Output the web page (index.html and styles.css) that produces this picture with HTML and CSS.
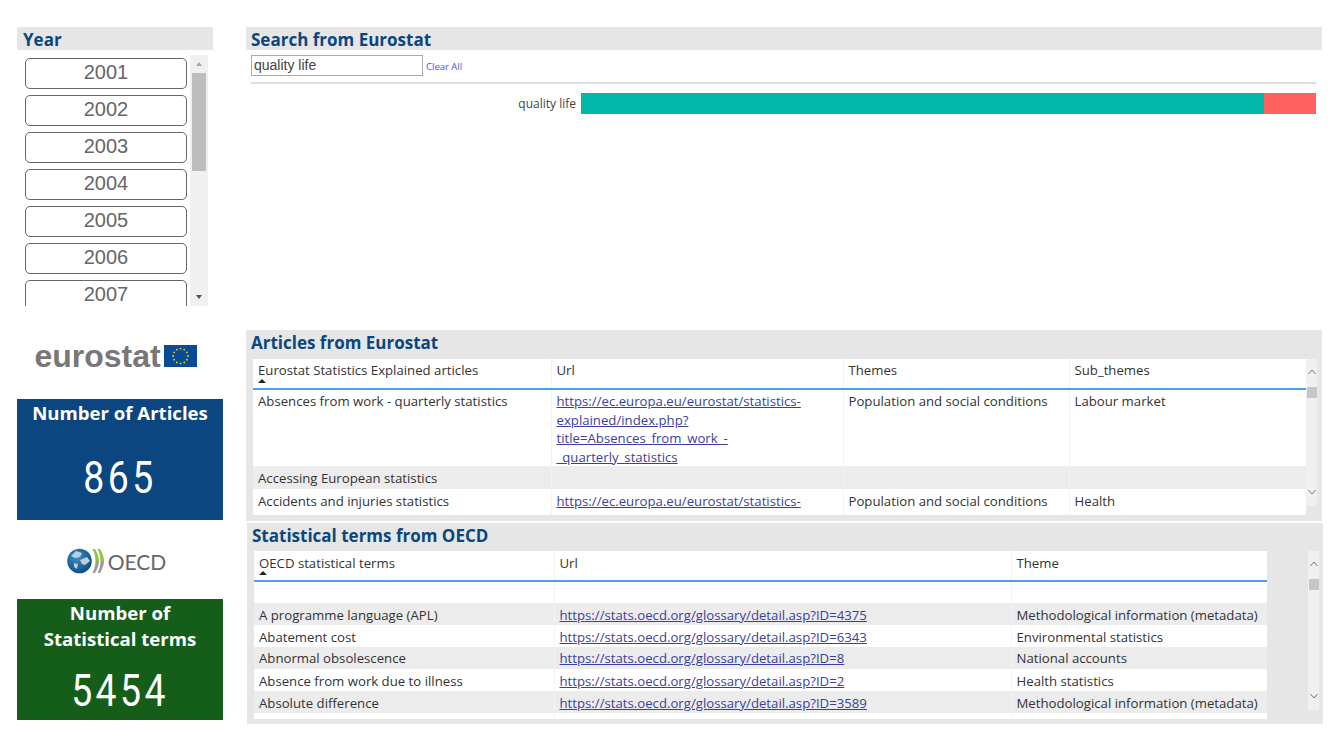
FILE: index.html
```html
<!DOCTYPE html>
<html lang='en'>
<head>
  <meta charset='UTF-8'>
  <title>Eurostat and OECD search</title>
  <link rel="stylesheet" href="styles.css">
</head>
<body>
  <div class='left'>
    <div class='year-panel'>
      <h2 class='year-title'>Year</h2>
      <div class='slicer'>
        <div class='slicer-list'>
          <div class='year-btn'>2001</div>
          <div class='year-btn'>2002</div>
          <div class='year-btn'>2003</div>
          <div class='year-btn'>2004</div>
          <div class='year-btn'>2005</div>
          <div class='year-btn'>2006</div>
          <div class='year-btn'>2007</div>
        </div>
        <div class='slicer-scroll'>
          <span class='arrow-up'></span>
          <span class='slicer-thumb'></span>
          <span class='arrow-down'></span>
        </div>
      </div>
    </div>

    <div class='logo-row logo-eurostat'>
      <span class='eurostat-word'>eurostat</span>
      <svg class='eu-flag' width='33' height='22' viewBox='0 0 33 22'>
        <rect width='33' height='22' fill='#0b4a94'/>
        <g fill='#f5d90a'>
          <circle cx='16.5' cy='3.6' r='0.9'/>
          <circle cx='20.2' cy='4.6' r='0.9'/>
          <circle cx='22.9' cy='7.3' r='0.9'/>
          <circle cx='23.9' cy='11' r='0.9'/>
          <circle cx='22.9' cy='14.7' r='0.9'/>
          <circle cx='20.2' cy='17.4' r='0.9'/>
          <circle cx='16.5' cy='18.4' r='0.9'/>
          <circle cx='12.8' cy='17.4' r='0.9'/>
          <circle cx='10.1' cy='14.7' r='0.9'/>
          <circle cx='9.1' cy='11' r='0.9'/>
          <circle cx='10.1' cy='7.3' r='0.9'/>
          <circle cx='12.8' cy='4.6' r='0.9'/>
        </g>
      </svg>
    </div>

    <div class='card card-blue'>
      <div class='card-title'>Number of Articles</div>
      <div class='card-value'>865</div>
    </div>

    <div class='logo-row logo-oecd'>
      <svg width='41' height='28' viewBox='0 0 41 28'>
        <defs>
          <radialGradient id='globe' cx='0.4' cy='0.35' r='0.7'>
            <stop offset='0' stop-color='#3f8fc4'/>
            <stop offset='1' stop-color='#0b4a7d'/>
          </radialGradient>
        </defs>
        <circle cx='12.5' cy='14' r='12.3' fill='url(#globe)'/>
        <path d='M4 9 L9 4 L15 6 L13 10 L8 11 Z M13 13 L20 10 L23 14 L18 18 L15 17 Z M7 16 L11 17 L10 22 L7 20 Z' fill='#b9cfdc'/>
        <path d='M25.5 2 L28 2 C30.5 6 32 10 32 14 L28.5 14 C28.5 10 27.5 6 25.5 2 Z M30.5 2 L33 2 C35.5 6 37 10 37 14 L33.5 14 C33.5 10 32.5 6 30.5 2 Z' fill='#8cc63f'/>
        <path d='M32 14 C32 18 30.5 22 28 26 L25.5 26 C27.5 22 28.5 18 28.5 14 Z M37 14 C37 18 35.5 22 33 26 L30.5 26 C32.5 22 33.5 18 33.5 14 Z' fill='#9a9a9a'/>
      </svg>
      <span class='oecd-word'>OECD</span>
    </div>

    <div class='card card-green'>
      <div class='card-title'>Number of<br>Statistical terms</div>
      <div class='card-value card-value-low'>5454</div>
    </div>
  </div>

  <div class='right'>
    <div class='search-panel'>
      <h2 class='panel-title'>Search from Eurostat</h2>
      <div class='search-row'>
        <input class='search-input' type='text' value='quality life'>
        <a class='clear-all'>Clear All</a>
      </div>
      <div class='search-line'></div>
      <div class='bar-row'>
        <span class='bar-label'>quality life</span>
        <div class='bar'>
          <div class='bar-teal'></div>
          <div class='bar-coral'></div>
        </div>
      </div>
    </div>

    <div class='table-panel articles-panel'>
      <h2 class='panel-title'>Articles from Eurostat</h2>
      <div class='table-wrap'>
        <div class='table-clip articles-clip'>
          <table class='articles-table'>
            <colgroup>
              <col class='a-col1'><col class='a-col2'><col class='a-col3'><col class='a-col4'>
            </colgroup>
            <tr class='head-row'>
              <th>Eurostat Statistics Explained articles<span class='sort-arrow'></span></th>
              <th>Url</th>
              <th>Themes</th>
              <th>Sub_themes</th>
            </tr>
            <tr class='article-tall'>
              <td>Absences from work - quarterly statistics</td>
              <td><a href='#'>https://ec.europa.eu/eurostat/statistics-<br>explained/index.php?<br>title=Absences_from_work_-<br>_quarterly_statistics</a></td>
              <td>Population and social conditions</td>
              <td>Labour market</td>
            </tr>
            <tr class='alt article-short'>
              <td>Accessing European statistics</td><td></td><td></td><td></td>
            </tr>
            <tr class='article-last'>
              <td>Accidents and injuries statistics</td>
              <td><a href='#'>https://ec.europa.eu/eurostat/statistics-<br>explained/index.php?</a></td>
              <td>Population and social conditions</td>
              <td>Health</td>
            </tr>
          </table>
        </div>
        <div class='table-scroll articles-scroll'>
          <svg class='chev' width='10' height='8' viewBox='0 0 10 8'><path d='M1.5 6 L5 2 L8.5 6' fill='none' stroke='#777' stroke-width='1'/></svg>
          <span class='table-thumb'></span>
          <svg class='chev chev-down' width='10' height='8' viewBox='0 0 10 8'><path d='M1.5 2 L5 6 L8.5 2' fill='none' stroke='#777' stroke-width='1'/></svg>
        </div>
      </div>
    </div>

    <div class='table-panel oecd-panel'>
      <h2 class='panel-title'>Statistical terms from OECD</h2>
      <div class='table-wrap'>
        <div class='table-clip oecd-clip'>
          <table class='oecd-table'>
            <colgroup>
              <col class='o-col1'><col class='o-col2'><col class='o-col3'>
            </colgroup>
            <tr class='head-row'>
              <th>OECD statistical terms<span class='sort-arrow'></span></th>
              <th>Url</th>
              <th>Theme</th>
            </tr>
            <tr class='blank-row'><td></td><td></td><td></td></tr>
            <tr class='alt'>
              <td>A programme language (APL)</td>
              <td><a href='#'>https://stats.oecd.org/glossary/detail.asp?ID=4375</a></td>
              <td>Methodological information (metadata)</td>
            </tr>
            <tr>
              <td>Abatement cost</td>
              <td><a href='#'>https://stats.oecd.org/glossary/detail.asp?ID=6343</a></td>
              <td>Environmental statistics</td>
            </tr>
            <tr class='alt tight'>
              <td>Abnormal obsolescence</td>
              <td><a href='#'>https://stats.oecd.org/glossary/detail.asp?ID=8</a></td>
              <td>National accounts</td>
            </tr>
            <tr>
              <td>Absence from work due to illness</td>
              <td><a href='#'>https://stats.oecd.org/glossary/detail.asp?ID=2</a></td>
              <td>Health statistics</td>
            </tr>
            <tr class='alt'>
              <td>Absolute difference</td>
              <td><a href='#'>https://stats.oecd.org/glossary/detail.asp?ID=3589</a></td>
              <td>Methodological information (metadata)</td>
            </tr>
            <tr class='blank-row'><td></td><td></td><td></td></tr>
          </table>
        </div>
        <div class='table-scroll oecd-scroll'>
          <svg class='chev' width='10' height='8' viewBox='0 0 10 8'><path d='M1.5 6 L5 2 L8.5 6' fill='none' stroke='#777' stroke-width='1'/></svg>
          <span class='table-thumb'></span>
          <svg class='chev chev-down' width='10' height='8' viewBox='0 0 10 8'><path d='M1.5 2 L5 6 L8.5 2' fill='none' stroke='#777' stroke-width='1'/></svg>
        </div>
      </div>
    </div>
  </div>
</body>
</html>
```

FILE: styles.css
```css
body {
  background-color: #fff;
  display: flex;
  margin: 0;
  padding: 27px 0 0 17px;
  height: 750px;
  box-sizing: border-box;
  overflow: hidden;
  font-family: "Open Sans", "Noto Sans", sans-serif;
  color: #333;
}

h2 {
  margin: 0;
  font-weight: 700;
  color: #0b4680;
}

.left {
  width: 206px;
  flex: none;
  display: flex;
  flex-direction: column;
}

.right {
  width: 1076px;
  margin-left: 23px;
  flex: none;
  display: flex;
  flex-direction: column;
}

/* year slicer */
.year-panel {
  height: 279px;
}

.year-title {
  width: 196px;
  height: 23px;
  padding-left: 6px;
  box-sizing: border-box;
  background: #e6e6e6;
  font-size: 17px;
  line-height: 25px;
}

.slicer {
  display: flex;
  width: 191px;
  height: 251px;
  margin-top: 5px;
  overflow: hidden;
}

.slicer-list {
  width: 173px;
  padding: 3px 0 0 8px;
  box-sizing: border-box;
  display: flex;
  flex-direction: column;
  gap: 6px;
}

.year-btn {
  flex: none;
  width: 162px;
  height: 31px;
  box-sizing: border-box;
  border: 1px solid #666;
  border-radius: 5px;
  font-family: "Liberation Sans", Arial, sans-serif;
  font-size: 20px;
  line-height: 27px;
  text-align: center;
  color: #666;
}

.slicer-scroll {
  width: 18px;
  background: #f0f0f0;
  position: relative;
}

.slicer-thumb {
  position: absolute;
  left: 2px;
  top: 18px;
  width: 14px;
  height: 98px;
  background: #bdbdbd;
}

.arrow-up,
.arrow-down {
  position: absolute;
  left: 6px;
  border-left: 3.5px solid transparent;
  border-right: 3.5px solid transparent;
}

.arrow-up {
  top: 7px;
  border-bottom: 4px solid #a6a6a6;
}

.arrow-down {
  bottom: 7px;
  border-top: 4px solid #505050;
}

/* logos */
.logo-row {
  display: flex;
  align-items: center;
  justify-content: center;
  box-sizing: border-box;
}

.logo-eurostat {
  height: 93px;
  gap: 3px;
  padding: 7px 9px 0 0;
}

.eurostat-word {
  font-family: "Liberation Sans", Arial, sans-serif;
  font-weight: 700;
  font-size: 32px;
  line-height: 24px;
  color: #777;
}

.logo-oecd {
  height: 79px;
  padding: 3px 7px 0 0;
}

.oecd-word {
  font-family: "Lato", "Open Sans", sans-serif;
  font-weight: 400;
  font-size: 21px;
  color: #666;
}

/* number cards */
.card {
  height: 121px;
  box-sizing: border-box;
  padding-top: 1px;
  text-align: center;
  color: #fff;
}

.card-blue {
  background: #0b4680;
}

.card-green {
  background: #145e1a;
}

.card-title {
  font-size: 18.6px;
  font-weight: 700;
  line-height: 26px;
}

.card-value {
  margin-top: 26px;
  font-family: "Roboto", sans-serif;
  font-size: 44px;
  line-height: 52px;
  letter-spacing: 4px;
  transform: scaleX(0.85);
}

.card-value-low {
  margin-top: 13px;
}

/* search */
.search-panel {
  height: 303px;
}

.panel-title {
  height: 23px;
  padding-left: 5px;
  background: #e6e6e6;
  font-size: 17px;
  line-height: 25px;
}

.search-row {
  display: flex;
  align-items: center;
  margin: 5px 0 0 5px;
}

.search-input {
  width: 172px;
  height: 21px;
  padding: 0 2px 2px;
  box-sizing: border-box;
  border: 1px solid #aaa;
  font-family: "Liberation Sans", Arial, sans-serif;
  font-size: 14px;
  color: #444;
  outline: none;
}

.clear-all {
  margin: 2px 0 0 3px;
  font-size: 9.5px;
  color: #4a55e8;
}

.search-line {
  height: 2px;
  margin: 6px 6px 0 5px;
  background: #dedede;
}

.bar-row {
  display: flex;
  align-items: center;
  margin: 9px 6px 0 0;
}

.bar-label {
  width: 335px;
  padding-right: 5px;
  box-sizing: border-box;
  text-align: right;
  font-size: 12px;
  color: #444;
}

.bar {
  flex: 1;
  display: flex;
  height: 21px;
}

.bar-teal {
  width: 683px;
  background: #01b8aa;
}

.bar-coral {
  flex: 1;
  background: #fd625e;
}

/* tables */
.table-panel {
  background: #e6e6e6;
}

.articles-panel {
  height: 191px;
}

.oecd-panel {
  height: 201px;
  margin: 2px -1px 0 1px;
}

.articles-panel .panel-title {
  height: 29px;
  line-height: 26px;
}

.oecd-panel .panel-title {
  height: 28px;
  line-height: 25px;
}

.table-wrap {
  display: flex;
  margin-left: 7px;
}

.table-clip {
  background: #fff;
  overflow: hidden;
}

.articles-clip {
  width: 1053px;
  height: 156px;
}

.oecd-clip {
  width: 1013px;
  height: 168px;
}

table {
  border-collapse: collapse;
  table-layout: fixed;
  width: 100%;
  font-size: 13.2px;
}

th,
td {
  padding: 0 5px;
  vertical-align: top;
  text-align: left;
  font-weight: 400;
  border-right: 1px solid #f3f3f3;
  line-height: 18.5px;
}

th:last-child,
td:last-child {
  border-right: 0;
}

.head-row th {
  height: 30px;
  padding-top: 2px;
  box-sizing: border-box;
  border-bottom: 2px solid #4aa3ea;
  position: relative;
}

.oecd-table .head-row th {
  padding-top: 3px;
  border-bottom-color: #5a9be0;
}

.sort-arrow {
  position: absolute;
  left: 5px;
  bottom: 5px;
  border-left: 4.5px solid transparent;
  border-right: 4.5px solid transparent;
  border-bottom: 4px solid #222;
}

td {
  padding-top: 2px;
}

.alt td {
  background: #ececec;
}

.article-tall td {
  height: 76px;
  box-sizing: border-box;
}

.article-short td {
  height: 23px;
  padding-top: 3px;
  box-sizing: border-box;
}

.article-last td {
  padding-top: 3px;
}

.oecd-table td {
  height: 22px;
  padding-top: 3px;
  box-sizing: border-box;
}

.oecd-table .tight td {
  padding-top: 2px;
}

.oecd-table .blank-row td {
  height: 22px;
}

a {
  color: #3a3f9e;
}

.a-col1 { width: 298px; }
.a-col2 { width: 292px; }
.a-col3 { width: 226px; }
.a-col4 { width: 237px; }

.o-col1 { width: 300px; }
.o-col2 { width: 457px; }
.o-col3 { width: 256px; }

.table-scroll {
  width: 11px;
  background: #f0f0f0;
  position: relative;
}

.articles-scroll {
  height: 147px;
}

.oecd-scroll {
  height: 159px;
  margin-left: 41px;
}

.table-thumb {
  position: absolute;
  left: 1px;
  top: 28px;
  width: 10px;
  height: 11px;
  background: #c6c6c6;
}

.chev {
  position: absolute;
  left: 1px;
  top: 9px;
}

.chev-down {
  top: auto;
  bottom: 10px;
}
```
